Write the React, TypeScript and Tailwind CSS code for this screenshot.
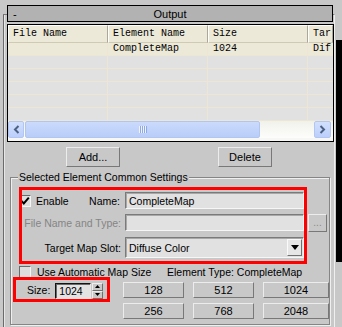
import React from "react";

type P = { children?: React.ReactNode; className?: string };

function Btn({ children, className = "" }: P) {
  return (
    <div
      className={
        "bg-[#c8c8c8] border border-t-[#ececec] border-l-[#ececec] border-b-[#787878] border-r-[#787878] flex items-center justify-center " +
        className
      }
    >
      {children}
    </div>
  );
}

function Check({ checked }: { checked?: boolean }) {
  return (
    <div className="w-[12px] h-[12px] shrink-0 bg-[#dedede] border border-t-[#6a6a6a] border-l-[#6a6a6a] border-b-[#f4f4f4] border-r-[#f4f4f4] flex items-center justify-center">
      {checked && (
        <svg width="10" height="10" viewBox="0 0 10 10">
          <path d="M1.2 4.6 L3.8 7.4 L8.8 1.6" stroke="#000" strokeWidth="2" fill="none" />
        </svg>
      )}
    </div>
  );
}

function Field({ children, className = "" }: P) {
  return (
    <div
      className={
        "bg-[#e1e1e1] border border-t-[#7a7a7a] border-l-[#7a7a7a] border-b-[#f6f6f6] border-r-[#f6f6f6] shadow-[inset_1px_1px_0_#a8a8a8] flex items-center " +
        className
      }
    >
      {children}
    </div>
  );
}

function Chevron({ dir }: { dir: "l" | "r" }) {
  return (
    <svg width="7" height="9" viewBox="0 0 7 9">
      <path
        d={dir === "l" ? "M5.5 1 L2 4.5 L5.5 8" : "M1.5 1 L5 4.5 L1.5 8"}
        stroke="#4d6185"
        strokeWidth="2"
        fill="none"
      />
    </svg>
  );
}

const cols = ["w-[100px]", "w-[100px]", "w-[100px]", "w-[25px]"];

function Row({ cells, first }: { cells: string[]; first?: boolean }) {
  return (
    <div
      className={
        "h-[13px] w-[325px] flex shrink-0 border-b border-[#ebe7d4] overflow-hidden " +
        (first ? "bg-[#ece9d8]" : "bg-[#e1e1e1]")
      }
    >
      {cells.map((c, i) => (
        <div
          key={i}
          className={
            cols[i] +
            " shrink-0 h-full overflow-hidden whitespace-nowrap pl-[5px] flex items-center " +
            (i < 3 ? "border-r border-[#ebe7d4]" : "")
          }
        >
          {c}
        </div>
      ))}
    </div>
  );
}

export default function App() {
  const headers = ["File Name", "Element Name", "Size", "Tar"];
  return (
    <div className="relative w-[342px] h-[327px] bg-[#c8c8c8] flex overflow-hidden font-['Liberation_Sans',Arial,sans-serif] text-[10.5px] leading-[12px] text-black">
      <div className="w-[336px] shrink-0 h-full pl-[3px] pt-[14px] overflow-hidden">
        <div className="w-[332px] h-[400px] border-l border-t border-r border-l-[#6a6a6a] border-t-[#7a7a7a] border-r-[#efefef] shadow-[inset_1px_0_0_#e6e6e6] flex flex-col">
          {/* title bar */}
          <div className="-mt-[10px] ml-[3px] w-[326px] h-[17px] shrink-0 border border-black bg-[#b2b2b2] flex items-center text-[11px]">
            <span className="w-[20px] pl-[5px]">-</span>
            <span className="flex-1 text-center">Output</span>
            <span className="w-[20px]" />
          </div>

          {/* list */}
          <div className="mt-[2px] ml-[3px] w-[327px] h-[118px] shrink-0 border border-black bg-[#f7f7f5] flex flex-col overflow-hidden font-['Liberation_Mono',monospace] text-[10px] leading-[10px]">
            <div className="h-[18px] w-[325px] flex shrink-0 overflow-hidden">
              {headers.map((h, i) => (
                <div
                  key={i}
                  className={
                    cols[i] +
                    " shrink-0 h-full bg-[#ece9d8] border-t border-l border-t-white border-l-white border-b border-b-[#cfcab4] border-r border-r-[#aca899] pl-[4px] flex items-center overflow-hidden whitespace-nowrap"
                  }
                >
                  {h}
                </div>
              ))}
            </div>
            <Row first cells={["", "CompleteMap", "1024", "Dif"]} />
            <Row cells={["", "", "", ""]} />
            <Row cells={["", "", "", ""]} />
            <Row cells={["", "", "", ""]} />
            <Row cells={["", "", "", ""]} />
            <Row cells={["", "", "", ""]} />
            {/* horizontal scrollbar */}
            <div className="h-[17px] shrink-0 flex bg-gradient-to-b from-[#f1f1ec] to-[#fdfdfb] pr-[2px]">
              <div className="w-[16px] h-full rounded-[2px] border border-[#b3c6f2] bg-gradient-to-b from-[#d2e0fd] to-[#bccffa] flex items-center justify-center">
                <Chevron dir="l" />
              </div>
              <div className="ml-[1px] w-[235px] h-full rounded-[2px] border border-[#b1c5f1] bg-gradient-to-b from-[#cbdafd] to-[#b9cdf8] flex items-center justify-center">
                <svg width="8" height="7" viewBox="0 0 8 7">
                  {[0, 2, 4, 6].map((x) => (
                    <g key={x}>
                      <rect x={x} y="0" width="1" height="7" fill="#eef3fe" />
                      <rect x={x + 1} y="0" width="1" height="7" fill="#8fa8e6" />
                    </g>
                  ))}
                </svg>
              </div>
              <div className="flex-1" />
              <div className="w-[17px] h-full rounded-[2px] border border-[#b3c6f2] bg-gradient-to-b from-[#d2e0fd] to-[#bccffa] flex items-center justify-center">
                <Chevron dir="r" />
              </div>
            </div>
          </div>

          {/* add / delete */}
          <div className="mt-[5px] h-[20px] shrink-0 flex">
            <Btn className="ml-[62px] w-[54px] h-full text-[11px]">Add...</Btn>
            <Btn className="ml-[98px] w-[54px] h-full text-[11px]">Delete</Btn>
          </div>

          {/* group */}
          <div className="mt-[10px] ml-[6px] w-[320px] h-[148px] shrink-0 border border-[#858585] shadow-[inset_1px_1px_0_#efefef,1px_1px_0_#efefef] flex flex-col">
            <div className="-mt-[7px] ml-[7px] w-fit px-[1px] h-[12px] bg-[#c8c8c8] whitespace-nowrap">
              Selected Element Common Settings
            </div>

            {/* row 1 */}
            <div className="mt-[9px] h-[17px] flex items-center">
              <div className="w-[114px] flex items-center">
                <div className="ml-[8px]">
                  <Check checked />
                </div>
                <span className="ml-[5px]">Enable</span>
                <span className="ml-auto pr-[5px]">Name:</span>
              </div>
              <Field className="w-[179px] h-[17px] pl-[3px]">CompleteMap</Field>
            </div>

            {/* row 2 */}
            <div className="mt-[5px] h-[18px] flex items-start">
              <div className="w-[114px] h-[17px] flex items-center justify-end pr-[4px] text-[#858585] whitespace-nowrap">
                File Name and Type:
              </div>
              <Field className="w-[179px] h-[17px]" />
              <Btn className="ml-[4px] w-[19px] h-[18px] text-[#8a8a8a] text-[10px]">...</Btn>
            </div>

            {/* row 3 */}
            <div className="mt-[5px] h-[21px] flex items-center">
              <div className="w-[114px] flex items-center justify-end pr-[4px] whitespace-nowrap">
                Target Map Slot:
              </div>
              <Field className="w-[179px] h-[21px] pl-[3px] pr-[1px]">
                <span className="flex-1">Diffuse Color</span>
                <div className="w-[15px] h-[17px] bg-[#e6e6e6] border border-t-[#fafafa] border-l-[#fafafa] border-b-[#707070] border-r-[#707070] flex items-center justify-center">
                  <svg width="8" height="5" viewBox="0 0 8 5">
                    <path d="M0 0 H8 L4 5 Z" fill="#000" />
                  </svg>
                </div>
              </Field>
            </div>

            {/* row 4 */}
            <div className="mt-[8px] h-[12px] flex items-center whitespace-nowrap">
              <div className="w-[156px] flex items-center">
                <div className="ml-[8px]">
                  <Check />
                </div>
                <span className="ml-[6px]">Use Automatic Map Size</span>
              </div>
              <span>Element Type: CompleteMap</span>
            </div>

            {/* row 5 */}
            <div className="mt-[4px] h-[16px] flex items-center">
              <div className="w-[112px] h-full flex items-center">
                <span className="ml-[16px]">Size:</span>
                <div className="ml-[5px] w-[36px] h-[16px] mt-[1px] bg-[#e3e3e3] border border-t-[#141414] border-l-[#141414] border-b-[#e8e8e8] border-r-[#e8e8e8] shadow-[inset_1px_1px_0_#6a6a6a] pl-[3px] flex items-center">
                  1024
                </div>
                <div className="ml-[1px] w-[11px] h-[16px] mt-[1px] flex flex-col">
                  <div className="h-[8px] border border-t-[#eeeeee] border-l-[#eeeeee] border-b-[#707070] border-r-[#707070] flex items-center justify-center">
                    <svg width="5" height="3" viewBox="0 0 5 3">
                      <path d="M2.5 0 L5 3 H0 Z" fill="#000" />
                    </svg>
                  </div>
                  <div className="h-[8px] border border-t-[#eeeeee] border-l-[#eeeeee] border-b-[#707070] border-r-[#707070] flex items-center justify-center">
                    <svg width="5" height="3" viewBox="0 0 5 3">
                      <path d="M0 0 H5 L2.5 3 Z" fill="#000" />
                    </svg>
                  </div>
                </div>
              </div>
              <Btn className="w-[61px] h-[16px] text-[11px]">128</Btn>
              <Btn className="ml-[9px] w-[61px] h-[16px] text-[11px]">512</Btn>
              <Btn className="ml-[9px] w-[66px] h-[16px] text-[11px]">1024</Btn>
            </div>

            {/* row 6 */}
            <div className="mt-[5px] h-[16px] flex items-center">
              <div className="w-[112px]" />
              <Btn className="w-[61px] h-[16px] text-[11px]">256</Btn>
              <Btn className="ml-[9px] w-[61px] h-[16px] text-[11px]">768</Btn>
              <Btn className="ml-[9px] w-[66px] h-[16px] text-[11px]">2048</Btn>
            </div>
          </div>
        </div>
      </div>

      {/* right scroll strip */}
      <div className="w-[6px] shrink-0 h-full flex flex-col">
        <div className="h-[40px]" />
        <div className="h-[222px] bg-black" />
      </div>

      {/* red annotation boxes */}
      <div className="absolute left-[19px] top-[187px] w-[288px] h-[77px] border-[3px] border-[#ff0000]" />
      <div className="absolute left-[13px] top-[277px] w-[97px] h-[25px] border-[3px] border-[#ff0000]" />
    </div>
  );
}
